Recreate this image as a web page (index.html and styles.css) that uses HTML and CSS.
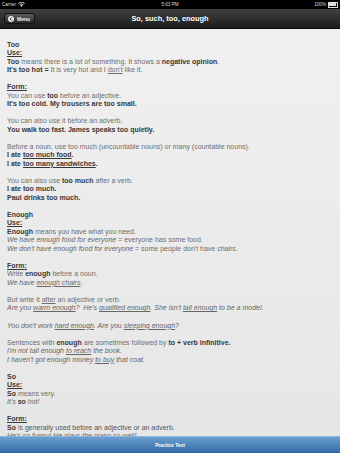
FILE: index.html
```html
<!DOCTYPE html>
<html lang="en">
<head>
    <meta charset="UTF-8">
    <meta name="viewport" content="width=device-width, initial-scale=1.0">
    <title>So, such, too, enough</title>
    <link rel="stylesheet" href="styles.css">
</head>
<body>
    <div class="app">
        <div class="status">
            <span class="carrier">Carrier
                <svg class="wifi" width="7" height="5" viewBox="0 0 14 10"><path d="M7 10 L4.5 7 A3.5 3.5 0 0 1 9.5 7 Z M2.6 5 A6.3 6.3 0 0 1 11.4 5 L10.4 6.2 A4.8 4.8 0 0 0 3.6 6.2 Z M0.5 2.6 A9.5 9.5 0 0 1 13.5 2.6 L12.5 3.8 A8 8 0 0 0 1.5 3.8 Z" fill="#ddd"/></svg>
            </span>
            <span class="clock">5:03 PM</span>
            <span class="battery">100% <span class="batt"><span class="batt-fill"></span></span></span>
        </div>
        <div class="navbar">
            <button class="back">
                <svg width="6" height="6" viewBox="0 0 12 12"><circle cx="6" cy="6" r="6" fill="#e8e8e8"/><path d="M7.3 3 L4.3 6 L7.3 9" stroke="#222" stroke-width="1.8" fill="none"/></svg>
                Menu
            </button>
            <h1 class="title">So, such, too, enough</h1>
        </div>
        <div class="content">
            <p><b>Too</b><br>
            <b class="head">Use:</b><br>
            <b>Too</b> means there is a lot of something. It shows a <b>negative opinion</b>.<br>
            <b>It's too hot =</b> It is very hot and I <u>don't</u> like it.</p>

            <p><b class="head">Form:</b><br>
            You can use <b>too</b> before an adjective.<br>
            <b>It's too cold. My trousers are too small.</b></p>

            <p>You can also use it before an adverb.<br>
            <b>You walk too fast. James speaks too quietly.</b></p>

            <p>Before a noun, use too much (uncountable nouns) or many (countable nouns).<br>
            <b>I ate <u>too much food</u>.</b><br>
            <b>I ate <u>too many sandwiches</u>.</b></p>

            <p>You can also use <b>too much</b> after a verb.<br>
            <b>I ate too much.</b><br>
            <b>Paul drinks too much.</b></p>

            <p><b>Enough</b><br>
            <b class="head">Use:</b><br>
            <b>Enough</b> means you have what you need.<br>
            <i>We have enough food for everyone</i> = everyone has some food.<br>
            <i>We don't have enough food for everyone</i> = some people don't have chairs.</p>

            <p><b class="head">Form:</b><br>
            Write <b>enough</b> before a noun.<br>
            <i>We have <u>enough chairs</u>.</i></p>

            <p>But write it <u>after</u> an adjective or verb.<br>
            <i>Are you <u>warm enough</u>?&nbsp; He's <u>qualified enough</u>. She isn't <u>tall enough</u> to be a model.</i></p>

            <p><i>You don't work <u>hard enough</u>. Are you <u>sleeping enough</u>?</i></p>

            <p>Sentences with <b>enough</b> are sometimes followed by <b>to + verb infinitive.</b><br>
            <i>I'm not tall enough <u>to reach</u> the book.</i><br>
            <i>I haven't got enough money <u>to buy</u> that coat.</i></p>

            <p><b>So</b><br>
            <b class="head">Use:</b><br>
            <b>So</b> means very.<br>
            <i>It's <b>so</b> hot!</i></p>

            <p class="dark"><b class="head">Form:</b><br>
            <b>So</b> is generally used before an adjective or an adverb.<br>
            <i>He's so funny! He plays the piano so well!</i></p>
        </div>
        <div class="footer">Practice Test</div>
    </div>
</body>
</html>
```

FILE: styles.css
```css
html, body { margin: 0; height: 100%; }
body { font-family: "Liberation Sans", Arial, sans-serif; background: #000; }

.app {
    display: flex;
    flex-direction: column;
    height: 100vh;
    overflow: hidden;
}

.status {
    height: 9px;
    flex: none;
    background: #000;
    color: #ddd;
    font-size: 4.6px;
    display: flex;
    align-items: center;
    justify-content: space-between;
    padding: 0 2px;
}
.carrier, .battery { display: flex; align-items: center; gap: 2px; width: 40px; }
.battery { justify-content: flex-end; }
.batt {
    width: 7px;
    height: 3px;
    border: 0.5px solid #ddd;
    padding: 0.5px;
}
.batt-fill { display: block; height: 100%; background: #ddd; }

.navbar {
    height: 19px;
    flex: none;
    display: flex;
    align-items: center;
    justify-content: center;
    position: relative;
    background: linear-gradient(#414141, #1c1c1c);
    border-bottom: 1px solid #0a0a0a;
}
.back {
    position: absolute;
    left: 4px;
    top: 4px;
    height: 11px;
    width: 31px;
    padding: 0 0 0 3px;
    display: flex;
    align-items: center;
    gap: 3px;
    font-family: inherit;
    font-size: 5px;
    font-weight: bold;
    color: #eee;
    background: linear-gradient(#5a5a5a, #2a2a2a);
    border: 0.5px solid #111;
    border-radius: 3px;
}
.title {
    margin: 0;
    color: #fff;
    font-size: 7.4px;
    font-weight: bold;
}

.content {
    flex: 1;
    overflow: hidden;
    background: linear-gradient(#f0f0f0, #e6e6e6);
    padding: 12px 7px 0;
    color: #6e6e6e;
    font-size: 7px;
    line-height: 8.4px;
}
.content p { margin: 0 0 8.8px; }
.content b { color: #383838; }
.content i { color: #666; }
.content .head { text-decoration: underline; }
.content .dark { color: #555; }

.footer {
    height: 16px;
    flex: none;
    display: flex;
    align-items: center;
    justify-content: center;
    background: linear-gradient(#6d9fd0, #2f6aa6);
    border-top: 1px solid #8db6de;
    color: #fff;
    font-size: 4.8px;
    font-weight: bold;
}
```
